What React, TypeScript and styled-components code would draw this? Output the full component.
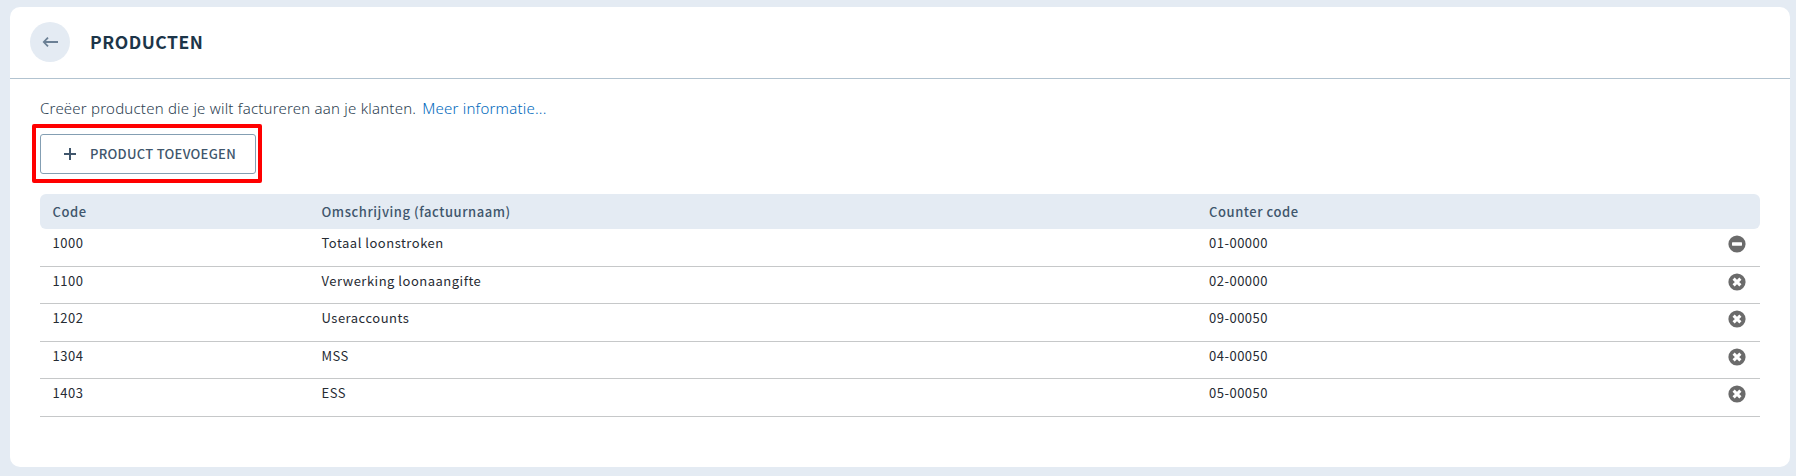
import React from "react";
import styled, { createGlobalStyle } from "styled-components";

const GlobalStyle = createGlobalStyle`
  * { box-sizing: border-box; }
  body {
    margin: 0;
    background: #e4ebf3;
    font-family: "Noto Sans CJK SC", "Noto Sans", sans-serif;
  }
`;

const Page = styled.div`
  height: 476px;
  padding: 7px 6px 9px 10px;
  overflow: hidden;
`;

const Card = styled.main`
  height: 460px;
  width: 1780px;
  border-radius: 10px;
  background: #fff;
`;

const Header = styled.header`
  display: flex;
  align-items: center;
  gap: 20px;
  height: 72px;
  padding: 0 20px 1px;
  border-bottom: 1px solid #b2c3d0;
`;

const BackButton = styled.button`
  display: flex;
  align-items: center;
  justify-content: center;
  width: 40px;
  height: 40px;
  padding: 0;
  border: 0;
  border-radius: 50%;
  background: #e4ebf3;
`;

const Title = styled.h1`
  margin: 0;
  color: #1c3549;
  font-size: 17.5px;
  font-weight: 700;
  line-height: 28px;
  letter-spacing: 0.52px;
`;

const Content = styled.div`
  padding: 15px 30px 0;
`;

const Intro = styled.p`
  margin: 0;
  height: 40px;
  color: #2b3d50;
  font-family: "Noto Sans", sans-serif;
  font-size: 15px;
  font-weight: 300;
  line-height: 28px;
  letter-spacing: 0.21px;
  white-space: pre;
`;

const InfoLink = styled.a`
  margin-left: 6px;
  color: #0068bc;
  text-decoration: none;
`;

const ActionArea = styled.div`
  position: relative;
  width: 216px;
  height: 40px;
  margin-bottom: 20px;
`;

const Highlight = styled.div`
  position: absolute;
  inset: -10px -6px -9px -8px;
  border: 4px solid #ff0000;
  border-radius: 2px;
  pointer-events: none;
`;

const AddButton = styled.button`
  display: flex;
  align-items: center;
  gap: 14px;
  width: 216px;
  height: 40px;
  padding: 0 0 0 23px;
  border: 1px solid #849fb3;
  border-radius: 3px;
  background: #fff;
  color: #40566c;
  font-family: inherit;
  font-size: 13px;
  font-weight: 500;
  line-height: 20px;
  letter-spacing: 0.28px;
  white-space: nowrap;
`;

const Row = styled.div<{ $height: number }>`
  display: grid;
  grid-template-columns: 269px 887.5px 1fr 18px;
  height: ${(p) => p.$height}px;
  padding: 0 14.5px 0 12.5px;
  border-bottom: 1px solid #c6c8c9;
`;

const HeadRow = styled(Row)`
  border: 0;
  border-radius: 6px;
  background: #e4ebf3;
`;

const HeadCell = styled.span`
  color: #40566c;
  font-size: 13px;
  font-weight: 500;
  line-height: 36px;
  letter-spacing: 0.56px;
`;

const Cell = styled.span`
  color: #262b33;
  font-size: 13px;
  line-height: 28px;
  letter-spacing: 0.5px;
`;

const StatusIcon = styled.svg`
  width: 18px;
  height: 18px;
  margin-top: 6px;
`;

const products = [
  { code: "1000", name: "Totaal loonstroken", counter: "01-00000", locked: true, height: 38 },
  { code: "1100", name: "Verwerking loonaangifte", counter: "02-00000", locked: false, height: 37 },
  { code: "1202", name: "Useraccounts", counter: "09-00050", locked: false, height: 38 },
  { code: "1304", name: "MSS", counter: "04-00050", locked: false, height: 37 },
  { code: "1403", name: "ESS", counter: "05-00050", locked: false, height: 38 },
];

export default function App() {
  return (
    <Page>
      <GlobalStyle />
      <Card>
        <Header>
          <BackButton aria-label="Terug">
            <svg width="18" height="14" viewBox="0 0 18 14" fill="none" stroke="#6b8095" strokeWidth="1.8">
              <path d="M17 7H2.8M7 2.6L2.8 7L7 11.4" />
            </svg>
          </BackButton>
          <Title>PRODUCTEN</Title>
        </Header>
        <Content>
          <Intro>
            Creëer producten die je wilt factureren aan je klanten.
            <InfoLink>Meer informatie...</InfoLink>
          </Intro>
          <ActionArea>
            <AddButton>
              <svg width="12" height="12" viewBox="0 0 12 12" fill="none" stroke="#40566c" strokeWidth="2">
                <path d="M6 0V12M0 6H12" />
              </svg>
              <span>PRODUCT TOEVOEGEN</span>
            </AddButton>
            <Highlight />
          </ActionArea>
          <HeadRow $height={35}>
            <HeadCell>Code</HeadCell>
            <HeadCell>Omschrijving (factuurnaam)</HeadCell>
            <HeadCell>Counter code</HeadCell>
          </HeadRow>
          {products.map((p) => (
            <Row key={p.code} $height={p.height}>
              <Cell>{p.code}</Cell>
              <Cell>{p.name}</Cell>
              <Cell>{p.counter}</Cell>
              <StatusIcon viewBox="0 0 18 18">
                <circle cx="9" cy="9" r="8.6" fill="#6b6b6b" />
                {p.locked ? (
                  <rect x="4" y="7.3" width="10" height="3.4" rx="0.6" fill="#fff" />
                ) : (
                  <path d="M5.6 5.6L12.4 12.4M12.4 5.6L5.6 12.4" stroke="#fff" strokeWidth="3" />
                )}
              </StatusIcon>
            </Row>
          ))}
        </Content>
      </Card>
    </Page>
  );
}
